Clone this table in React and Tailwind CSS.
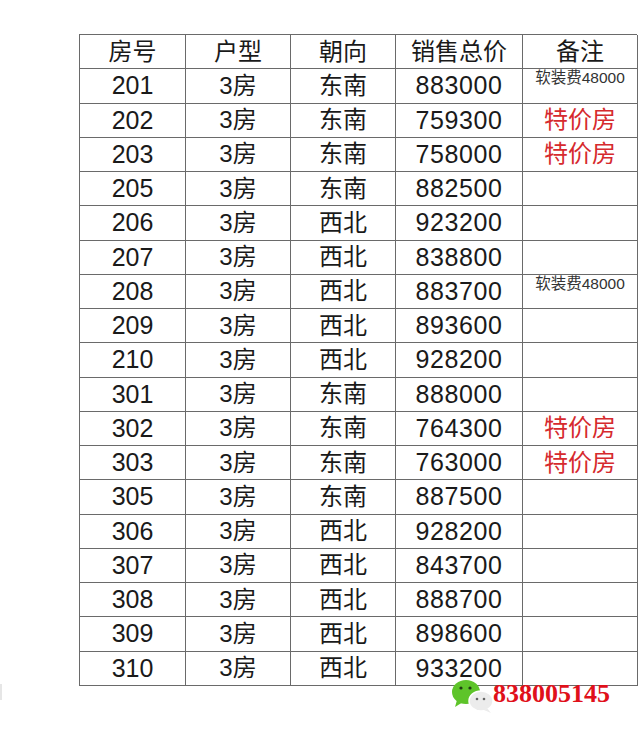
import React from "react";

const rows = [
  ["201", "3房", "东南", "883000", "s"],
  ["202", "3房", "东南", "759300", "r"],
  ["203", "3房", "东南", "758000", "r"],
  ["205", "3房", "东南", "882500", ""],
  ["206", "3房", "西北", "923200", ""],
  ["207", "3房", "西北", "838800", ""],
  ["208", "3房", "西北", "883700", "s"],
  ["209", "3房", "西北", "893600", ""],
  ["210", "3房", "西北", "928200", ""],
  ["301", "3房", "东南", "888000", ""],
  ["302", "3房", "东南", "764300", "r"],
  ["303", "3房", "东南", "763000", "r"],
  ["305", "3房", "东南", "887500", ""],
  ["306", "3房", "西北", "928200", ""],
  ["307", "3房", "西北", "843700", ""],
  ["308", "3房", "西北", "888700", ""],
  ["309", "3房", "西北", "898600", ""],
  ["310", "3房", "西北", "933200", ""],
];

const font = { fontFamily: '"Liberation Sans", "Noto Sans CJK SC", sans-serif' };

function Cell({ children, className = "" }) {
  return (
    <div className={"h-[34.25px] border-r-[1.5px] border-b-[1.5px] border-[#6a6a6a] flex items-center justify-center text-[24px] leading-none text-[#1a1a1a] " + className}>
      {children}
    </div>
  );
}

function WeChat() {
  return (
    <svg width="46" height="34" viewBox="0 0 46 34">
      <ellipse cx="15" cy="13" rx="14" ry="12" fill="#5ec42a" />
      <path d="M6 21 L4 28 L12 23 Z" fill="#5ec42a" />
      <circle cx="10" cy="9" r="1.6" fill="#1f3d12" />
      <circle cx="19" cy="9" r="1.6" fill="#1f3d12" />
      <ellipse cx="30" cy="22" rx="12" ry="10" fill="#ececec" stroke="#ffffff" strokeWidth="1.5" />
      <path d="M36 29 L40 34 L33 31 Z" fill="#ececec" />
      <circle cx="26" cy="20" r="1.3" fill="#666" />
      <circle cx="33" cy="20" r="1.3" fill="#666" />
    </svg>
  );
}

export default function App() {
  return (
    <div className="w-[640px] h-[731px] bg-white relative overflow-hidden" style={font}>
      <div className="pt-[34px] pl-[79px]">
        <div className="grid grid-cols-[106px_105px_105px_127px_115px] w-[558px] border-l-[1.5px] border-t-[1.5px] border-[#6a6a6a]">
          <Cell>房号</Cell>
          <Cell>户型</Cell>
          <Cell>朝向</Cell>
          <Cell>销售总价</Cell>
          <Cell>备注</Cell>
          {rows.map((r) => (
            <React.Fragment key={r[0]}>
              <Cell className="text-[25px]">{r[0]}</Cell>
              <Cell>{r[1]}</Cell>
              <Cell>{r[2]}</Cell>
              <Cell className="text-[25px] tracking-[0.6px]">{r[3]}</Cell>
              {r[4] === "s" ? (
                <Cell className="!items-start pt-[0px]">
                  <span className="text-[15.5px] text-[#333] leading-[18px]">软装费48000</span>
                </Cell>
              ) : r[4] === "r" ? (
                <Cell>
                  <span className="text-[24px] text-[#d62a2e]">特价房</span>
                </Cell>
              ) : (
                <Cell />
              )}
            </React.Fragment>
          ))}
        </div>
      </div>
      <div className="absolute left-[451px] top-[679px] flex items-center">
        <WeChat />
        <span
          className="ml-[-4px] mt-[-4px] text-[26px] font-bold text-[#e0101a] leading-none"
          style={{ fontFamily: '"Liberation Serif", serif' }}
        >
          838005145
        </span>
      </div>
      <div className="absolute left-0 top-[684px] w-[2px] h-[16px] bg-[#e6e6e6]" />
    </div>
  );
}
